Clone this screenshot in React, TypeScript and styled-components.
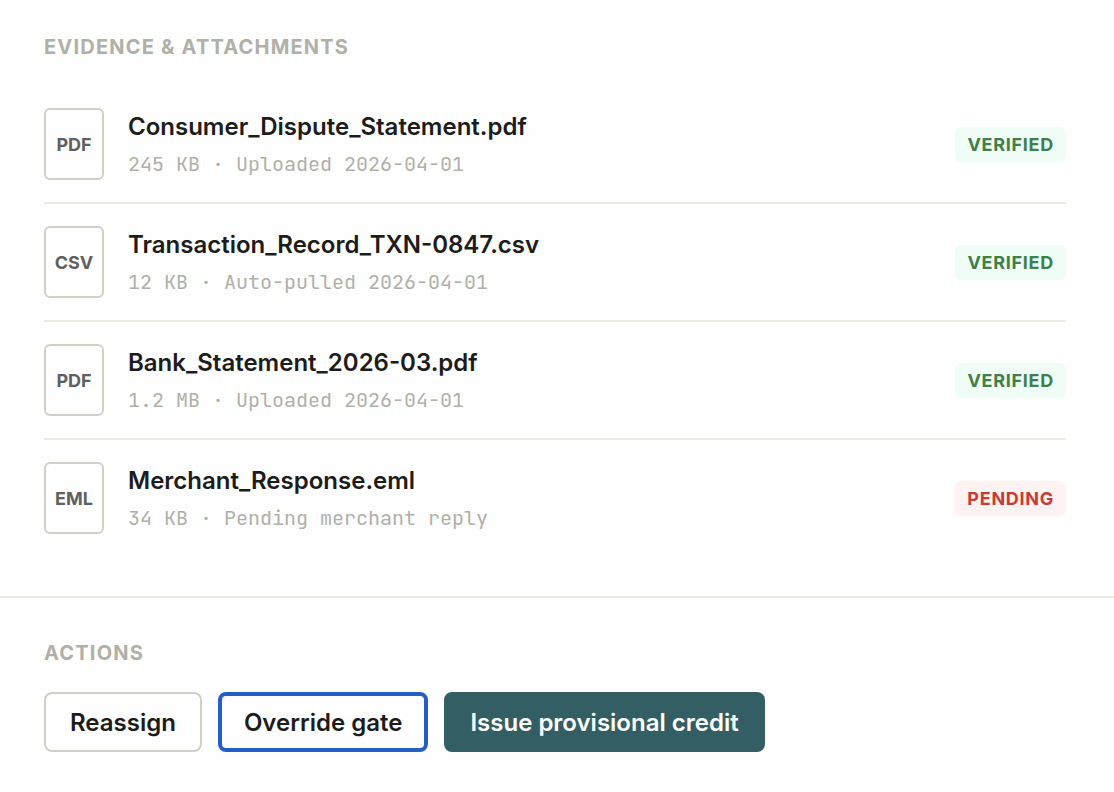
import React from "react";
import styled, { createGlobalStyle, css } from "styled-components";

const GlobalStyle = createGlobalStyle`
  *, *::before, *::after { box-sizing: border-box; }
  body {
    margin: 0;
    background: #fefefe;
    color: #1c1c1c;
    font-family: Inter, "Liberation Sans", sans-serif;
    -webkit-font-smoothing: antialiased;
  }
`;

const Section = styled.section`
  padding: 40px 48px 40px 44px;

  & + & {
    border-top: 2px solid #ecece6;
  }
`;

const EvidenceSection = styled(Section)`
  padding-top: 32px;
`;

const Heading = styled.h2`
  margin: 0 0 24px;
  color: #b0b0a8;
  font-size: 20px;
  font-weight: 700;
  line-height: 30px;
  letter-spacing: 0.06em;
  text-transform: uppercase;
`;

const FileList = styled.ul`
  margin: 0;
  padding: 0;
  list-style: none;
`;

const FileRow = styled.li`
  display: flex;
  align-items: center;
  gap: 24px;
  padding: 22px 0;

  & + & {
    border-top: 2px solid #ecece6;
  }
`;

const FileType = styled.span`
  display: flex;
  flex: none;
  align-items: center;
  justify-content: center;
  width: 60px;
  height: 72px;
  border: 2px solid #d0d0c8;
  border-radius: 6px;
  color: #606060;
  font-size: 18px;
  font-weight: 700;
`;

const FileInfo = styled.div`
  flex: 1;
  min-width: 0;
`;

const FileName = styled.div`
  font-size: 24px;
  font-weight: 600;
  line-height: 38px;
`;

const FileMeta = styled.div`
  padding: 4px 0 2px;
  color: #b0b0a8;
  font-family: "JetBrains Mono", "Liberation Mono", monospace;
  font-size: 20px;
  line-height: 28px;
`;

const Badge = styled.span<{ $pending: boolean }>`
  flex: none;
  padding: 6px 12px;
  border-radius: 6px;
  background: ${(p) => (p.$pending ? "#fef2f2" : "#f0fdf6")};
  color: ${(p) => (p.$pending ? "#c93a34" : "#3d8048")};
  font-size: 18px;
  font-weight: 700;
  line-height: 23px;
  letter-spacing: 0.04em;
  text-transform: uppercase;
`;

const ButtonRow = styled.div`
  display: flex;
  flex-wrap: wrap;
  gap: 16px;
`;

type Variant = "default" | "selected" | "primary";

const variants = {
  default: css`
    padding: 14px 24px 12px;
    border: 2px solid #d0d0c8;
    background: #fefefe;
    color: #1c1c1c;
  `,
  selected: css`
    padding: 12px 22px 10px;
    border: 4px solid #255dc8;
    background: #fefefe;
    color: #1c1c1c;
  `,
  primary: css`
    padding: 14px 24px 12px;
    border: 2px solid #335e64;
    background: #335e64;
    color: #fefefe;
  `,
};

const Button = styled.button<{ $variant: Variant }>`
  border-radius: 8px;
  font-family: inherit;
  font-size: 24px;
  font-weight: 600;
  line-height: 30px;
  cursor: pointer;
  ${(p) => variants[p.$variant]}
`;

const files = [
  { type: "PDF", name: "Consumer_Dispute_Statement.pdf", meta: "245 KB · Uploaded 2026-04-01", status: "Verified" },
  { type: "CSV", name: "Transaction_Record_TXN-0847.csv", meta: "12 KB · Auto-pulled 2026-04-01", status: "Verified" },
  { type: "PDF", name: "Bank_Statement_2026-03.pdf", meta: "1.2 MB · Uploaded 2026-04-01", status: "Verified" },
  { type: "EML", name: "Merchant_Response.eml", meta: "34 KB · Pending merchant reply", status: "Pending" },
];

const actions: { label: string; variant: Variant }[] = [
  { label: "Reassign", variant: "default" },
  { label: "Override gate", variant: "selected" },
  { label: "Issue provisional credit", variant: "primary" },
];

export default function App() {
  return (
    <>
      <GlobalStyle />
      <main>
        <EvidenceSection>
          <Heading>Evidence &amp; Attachments</Heading>
          <FileList>
            {files.map((file) => (
              <FileRow key={file.name}>
                <FileType>{file.type}</FileType>
                <FileInfo>
                  <FileName>{file.name}</FileName>
                  <FileMeta>{file.meta}</FileMeta>
                </FileInfo>
                <Badge $pending={file.status === "Pending"}>{file.status}</Badge>
              </FileRow>
            ))}
          </FileList>
        </EvidenceSection>
        <Section>
          <Heading>Actions</Heading>
          <ButtonRow>
            {actions.map((action) => (
              <Button key={action.label} type="button" $variant={action.variant}>
                {action.label}
              </Button>
            ))}
          </ButtonRow>
        </Section>
      </main>
    </>
  );
}
